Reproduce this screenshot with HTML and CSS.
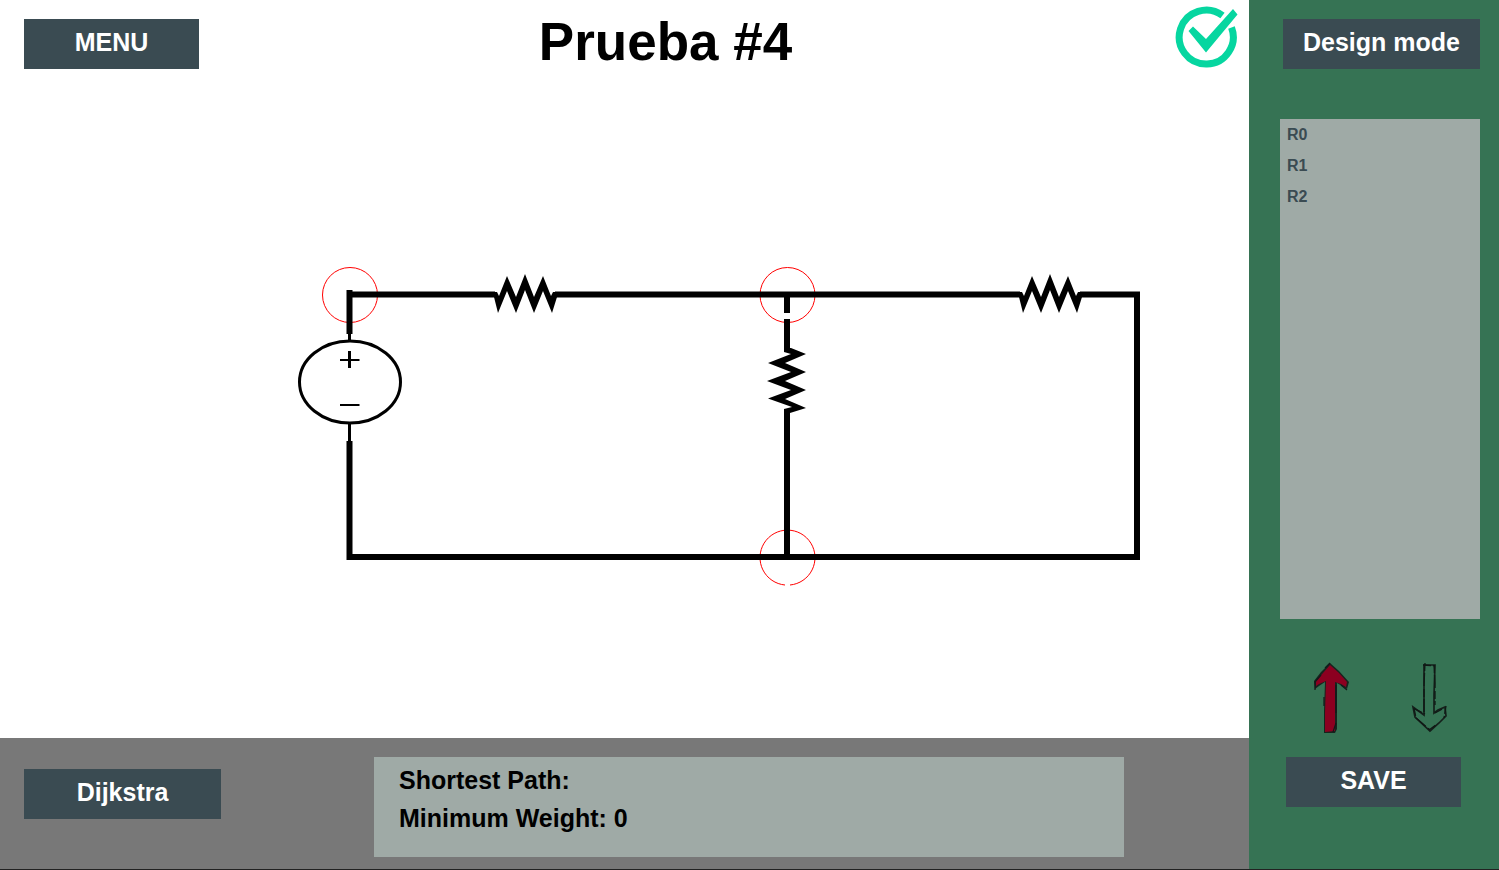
FILE: index.html
```html
<!DOCTYPE html>
<html lang="en">
<head>
<meta charset="utf-8">
<title>Prueba #4</title>
<link rel="stylesheet" href="styles.css">
</head>
<body>
<div class="app">
  <main class="workspace">
    <header class="topbar">
      <button class="btn btn-small" type="button">MENU</button>
      <h1 class="title">Prueba #4</h1>
      <svg class="status" viewBox="1175 6 64 64" role="img" aria-label="Valid circuit">
        <path d="M1223.500 16.500A27 27 0 1 0 1232.500 28.500" fill="none" stroke="#06d6a0" stroke-width="7"/>
        <path d="M1189.500 32L1194 27.500L1207 40L1234 10L1238.500 15.500L1207 53.500Z" fill="#06d6a0"/>
      </svg>
    </header>
    <svg class="circuit" viewBox="0 88 1249 650" role="img" aria-label="Circuit diagram">
      <g class="node">
        <circle cx="350" cy="295" r="27.500"/>
        <circle cx="787.500" cy="295" r="27.500"/>
        <path d="M785 585A27.500 27.500 0 1 1 790 585"/>
      </g>
      <g class="wire">
        <path d="M349.500 334V290"/>
        <path d="M349.500 294.500H495"/>
        <path d="M555 294.500H1020"/>
        <path d="M1080 294.500H1137V557H349.500V441"/>
        <path d="M787 294V313"/>
        <path d="M787 319V352"/>
        <path d="M787 409V557"/>
      </g>
      <g class="resistor">
        <path id="zigzag" d="M493 292H497L499 296L507 276L516 297L525 274L534 297L543 276L551 296L553 292H558V297H557L552 313L543 291L534 313L525 290L516 313L507 291L498 313L494 297Z"/>
        <use href="#zigzag" x="525"/>
        <path d="M784 348H791L806 354L785 363L806 372L785 381L806 390L785 399L806 408L790 413H784V409L792 407L768 398.500L791 390L767 381L791 372L768 363L791 354L784 352Z"/>
      </g>
      <g class="source">
        <ellipse cx="350" cy="382" rx="50.500" ry="41"/>
        <path d="M349.500 333V341M349.500 423V443M349.500 351V368"/>
        <path class="sign" d="M340 360H359.500M340 405H359.500"/>
      </g>
    </svg>
    <footer class="bottombar">
      <button class="btn dijkstra" type="button">Dijkstra</button>
      <section class="result">
        <p>Shortest Path:</p>
        <p>Minimum Weight: 0</p>
      </section>
    </footer>
  </main>
  <aside class="sidebar">
    <button class="btn mode" type="button">Design mode</button>
    <ul class="parts">
      <li>R0</li>
      <li>R1</li>
      <li>R2</li>
    </ul>
    <div class="arrows">
      <button class="arrow" type="button" aria-label="Ascending">
        <svg viewBox="0 0 40 74">
          <path d="M19 2L28 10L38 21L36 28L31 25L26 22L26 68L24 72L13 72L13 50L14 21L8 25L4 28L3 20L10 11Z" fill="#17251e"/>
          <path d="M19 4L28 12L36 21L35 26L30 23L24 21L24 70L14 71L14 52L15 20L8 23L5 25L5 20L12 12Z" fill="#8c0020"/>
          <path d="M4 29L4 21L10 14M19 2L14 7M25 24L25 52M13 36V45M22 71L25 62M30 24L36 29" fill="none" stroke="#11191a" stroke-width="1.200"/>
        </svg>
      </button>
      <button class="arrow" type="button" aria-label="Descending">
        <svg viewBox="0 0 40 74">
          <path d="M15 4L26 4L25 34L25 52L29 49L36 46L37 55L30 62L21 70L6 56L4 46L15 54L15 30Z" fill="none" stroke="#15201b" stroke-width="1.700"/>
          <path d="M16 2L15 24L15 52M14 4L26 5M25 4L26 22L26 44M5 47L7 57L21 69M37 45L35 57M6 48L16 53M26 52L35 47M20 69L28 63" fill="none" stroke="#101815" stroke-width="1.300" stroke-dasharray="8 2 13 3"/>
        </svg>
      </button>
    </div>
    <button class="btn btn-small save" type="button">SAVE</button>
  </aside>
</div>
</body>
</html>
```
FILE: styles.css
```css
* {
  box-sizing: border-box;
}

body {
  margin: 0;
  font-family: "Liberation Sans", Arial, sans-serif;
  font-weight: bold;
  color: #000;
}

.app {
  display: grid;
  grid-template-columns: 1fr 250px;
  min-height: 100vh;
  border-bottom: 1px solid #222;
}

.workspace {
  display: flex;
  flex-direction: column;
  background: #fff;
}

.topbar {
  display: grid;
  grid-template-columns: 175px 1fr 106px;
  align-items: start;
  height: 88px;
  padding: 0 11px 0 24px;
}

.topbar .btn {
  margin-top: 19px;
}

.title {
  margin: 12px 0 0;
  font-size: 53px;
  line-height: 60px;
  text-align: center;
}

.status {
  width: 64px;
  height: 64px;
  margin-top: 5px;
  justify-self: end;
}

.btn {
  height: 50px;
  padding: 0 0 4px;
  border: 0;
  background: #3a4b52;
  color: #fff;
  font: bold 25px/28px "Liberation Sans", Arial, sans-serif;
}

.btn-small {
  width: 175px;
}

.circuit {
  flex: 1;
  width: 100%;
  min-height: 0;
}

.node {
  fill: none;
  stroke: #f00;
  stroke-width: 1;
}

.wire {
  fill: none;
  stroke: #000;
  stroke-width: 6;
}

.source {
  fill: none;
  stroke: #000;
  stroke-width: 3;
}

.sign {
  stroke-width: 2;
}

.bottombar {
  display: flex;
  align-items: flex-start;
  gap: 153px;
  height: 131px;
  padding: 19px 125px 0 24px;
  background: #787878;
}

.dijkstra {
  width: 197px;
  margin-top: 12px;
}

.result {
  flex: 1;
  height: 100px;
  padding: 4px 25px;
  background: #9faaa6;
}

.result p {
  margin: 0;
  font-size: 25px;
  line-height: 38px;
}

.sidebar {
  display: flex;
  flex-direction: column;
  padding: 19px 19px 0 31px;
  background: #367354;
}

.mode {
  width: 197px;
  align-self: flex-end;
}

.parts {
  height: 500px;
  margin: 50px 0 0;
  padding: 0 7px;
  list-style: none;
  background: #9faaa6;
  color: #3a4b52;
  font-size: 16px;
  line-height: 31px;
}

.arrows {
  display: flex;
  justify-content: space-between;
  margin-top: 42px;
  padding: 0 31px;
}

.arrow {
  width: 40px;
  height: 74px;
  padding: 0;
  border: 0;
  background: none;
}

.arrow svg {
  display: block;
  width: 100%;
  height: 100%;
}

.save {
  margin: 22px 0 0 6px;
}
```
